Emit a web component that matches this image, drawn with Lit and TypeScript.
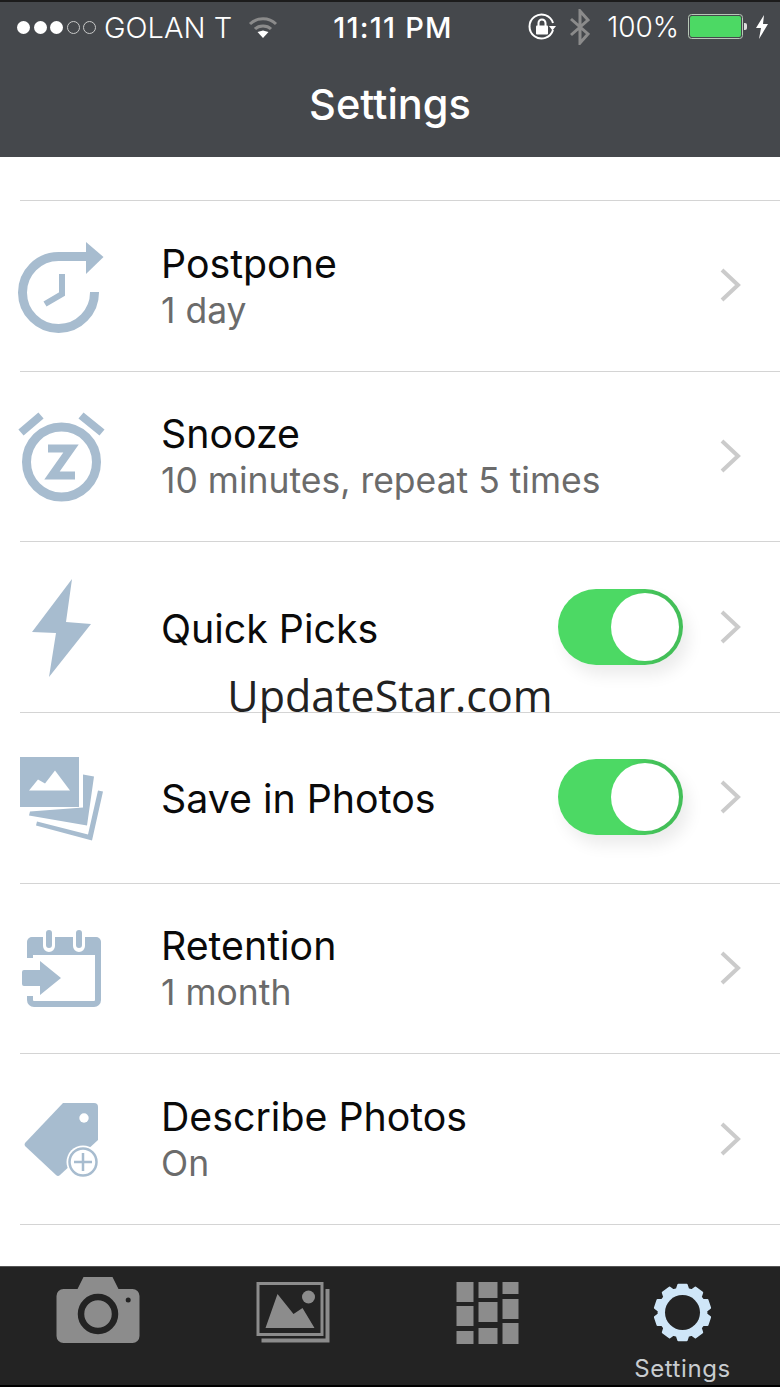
import { LitElement, html, css } from "lit";
import { customElement } from "lit/decorators.js";

const gearPath = () => {
  // 10 teeth round a ring, centre 682,1312.5
  const cx = 682, cy = 1312.5, outer = 28, inner = 24;
  let d = "";
  for (let i = 0; i < 10; i++) {
    const a = (i * Math.PI) / 5 - Math.PI / 2;
    const pts = [[inner, -0.24], [outer, -0.15], [outer, 0.15], [inner, 0.24]];
    for (const [r, o] of pts) {
      const x = cx + r * Math.cos(a + o);
      const y = cy + r * Math.sin(a + o);
      d += `${d ? "L" : "M"}${x.toFixed(1)} ${y.toFixed(1)}`;
    }
  }
  return d + "Z";
};

const icons = {
  postpone: html`<svg viewBox="10 236 100 100">
    <path class="line" stroke-width="9" d="M94.5 293A36 36 0 1 1 58.5 257.5H88" />
    <polygon class="fill" points="86,243 103.5,258 86,275" />
    <path class="line" stroke-width="6" d="M62 275V295L45 305" />
  </svg>`,
  snooze: html`<svg viewBox="10 406.5 100 100">
    <circle class="line" cx="61.5" cy="462.5" r="35" stroke-width="9" />
    <path class="line" stroke-width="8" d="M21 433L41 416M81 416L102 433" />
    <path class="line" stroke-width="8" d="M48 449H71L52 476H75" />
  </svg>`,
  quick: html`<svg viewBox="10 577 100 100">
    <polygon class="fill" points="72,579 66,622 91,624 49,677 56,633 32,632" />
  </svg>`,
  photos: html`<svg viewBox="10 747.500 100 100">
    <rect class="fill" x="20" y="757.500" width="59" height="50" />
    <polygon fill="#fff" points="29,791 38,780 45,784 55,771 70,791" />
    <polygon class="fill" points="83,775 94,777 87,826 29,816 30,812 83,808" />
    <polygon class="fill" points="98,791 103,792 92,841 36,826 37,822 88,835" />
  </svg>`,
  retention: html`<svg viewBox="10 918 100 100">
    <rect class="line" x="30" y="940" width="68" height="64" rx="4" stroke-width="6" />
    <rect class="fill" x="27" y="937" width="74" height="18" rx="5" />
    <path d="M49 928V946M79 928V946" stroke="#fff" stroke-width="12" stroke-linecap="round" />
    <path class="line" stroke-width="6" stroke-linecap="round" d="M49 933V945M79 933V945" />
    <rect x="24" y="958" width="20" height="38" fill="#fff" />
    <path class="fill" d="M22 972a2 2 0 0 1 2-2H40V961L61 978L40 995V986H24a2 2 0 0 1-2-2Z" />
  </svg>`,
  describe: html`<svg viewBox="10 1089 100 100">
    <path class="fill" d="M63 1103H94a4 4 0 0 1 4 4V1140L60 1175a3 3 0 0 1-4 0L25 1146a3 3 0 0 1 0-3Z" />
    <circle cx="84" cy="1118" r="4.700" fill="#fff" />
    <circle cx="83" cy="1162" r="16.500" fill="#fff" />
    <circle class="line" cx="83" cy="1162" r="13.500" stroke-width="2.500" />
    <path class="line" stroke-width="2.500" d="M83 1153V1171M74 1162H92" />
  </svg>`,
};

const rows = [
  { icon: icons.postpone, label: "Postpone", sub: "1 day" },
  { icon: icons.snooze, label: "Snooze", sub: "10 minutes, repeat 5 times" },
  { icon: icons.quick, label: "Quick Picks", toggle: true },
  { icon: icons.photos, label: "Save in Photos", toggle: true },
  { icon: icons.retention, label: "Retention", sub: "1 month" },
  { icon: icons.describe, label: "Describe Photos", sub: "On" },
];

@customElement("app-root")
export class AppRoot extends LitElement {
  static styles = css`
    :host {
      display: flex;
      flex-direction: column;
      position: relative;
      height: 1387px;
      background: #fff;
      font-family: Inter, "Liberation Sans", sans-serif;
      overflow: hidden;
    }

    .top {
      background: #45484c;
      border-top: 2px solid #1c1c1c;
      height: 155px;
      color: #fff;
    }

    .status {
      display: grid;
      grid-template-columns: 1fr auto 1fr;
      align-items: center;
      height: 50px;
      font-size: 28px;
      font-weight: 300;
    }

    .status-left {
      display: flex;
      align-items: center;
      padding-left: 17px;
    }

    .dots {
      display: flex;
      gap: 3.500px;
      margin-right: 8px;
    }

    .dot {
      width: 13px;
      height: 13px;
      border-radius: 50%;
      box-sizing: border-box;
      background: #fff;
    }

    .dot.off {
      background: none;
      border: 1px solid #c8c8c8;
    }

    .name {
      font-size: 29px;
    }

    .wifi {
      width: 30px;
      height: 24px;
      margin-left: 16px;
    }

    .time {
      font-weight: 500;
      font-size: 29px;
      letter-spacing: 1.2px;
      padding-left: 6px;
    }

    .status-right {
      display: flex;
      align-items: center;
      justify-content: flex-end;
      padding-right: 11px;
    }

    .lock {
      width: 28px;
      height: 28px;
    }

    .bt {
      width: 20px;
      height: 36px;
      margin-left: 14px;
    }

    .pct {
      margin-left: 17px;
    }

    .battery {
      width: 60px;
      height: 26px;
      margin-left: 9px;
    }

    .charge {
      width: 14px;
      height: 24px;
      margin-left: 7px;
    }

    .title {
      text-align: center;
      font-size: 41.500px;
      font-weight: 500;
      line-height: 46px;
      margin-top: 29px;
    }

    .list {
      flex: 1;
      padding-top: 43px;
    }

    .row {
      display: flex;
      align-items: center;
      height: 170.670px;
      box-sizing: border-box;
      position: relative;
      padding-left: 10px;
    }

    .row::before {
      content: "";
      position: absolute;
      left: 20px;
      right: 0;
      top: 0;
      height: 1px;
      background: #d4d4d4;
    }

    .list-end {
      margin-left: 20px;
      height: 1px;
      background: #d4d4d4;
    }

    .icon svg {
      display: block;
      width: 100px;
      height: 100px;
    }

    .icon .fill {
      fill: #a7bccf;
    }

    .icon .line {
      fill: none;
      stroke: #a7bccf;
    }

    .text {
      flex: 1;
      margin-left: 51px;
    }

    .label {
      font-size: 39.300px;
      line-height: 46px;
      color: #0a0a0a;
      padding-top: 4px;
    }

    .sub {
      font-size: 35.500px;
      line-height: 46px;
      color: #6b6b6b;
      padding-top: 1px;
    }

    .toggle {
      display: flex;
      align-items: center;
      justify-content: flex-end;
      width: 125px;
      height: 76px;
      padding-right: 4px;
      box-sizing: border-box;
      border-radius: 38px;
      background: linear-gradient(90deg, #4cd964 55%, #43bf58 80%);
      box-shadow: 6px 10px 16px rgba(0, 0, 0, 0.08);
    }

    .knob {
      width: 68px;
      height: 68px;
      border-radius: 50%;
      background: #fff;
    }

    .chevron {
      width: 24px;
      height: 34px;
      margin-left: 36px;
      margin-right: 37px;
    }

    .tabs {
      display: grid;
      grid-template-columns: repeat(4, 1fr);
      height: 121px;
      box-sizing: border-box;
      background: #232323;
      border-top: 1px solid #555;
      border-bottom: 2px solid #000;
    }

    .tab {
      display: flex;
      flex-direction: column;
      align-items: center;
      padding-top: 5px;
    }

    .tab svg {
      display: block;
      width: 100px;
      height: 75px;
    }

    .tab-label {
      font-size: 24px;
      line-height: 30px;
      margin-top: 7px;
      letter-spacing: 0.6px;
      color: #c8ccd0;
    }

    .mark {
      position: absolute;
      left: 0;
      right: 0;
      top: 667px;
      text-align: center;
      font-family: "Open Sans", sans-serif;
      font-size: 43px;
      line-height: 58px;
      color: #222;
    }
  `;

  render() {
    return html`
      <div class="top">
        <div class="status">
          <div class="status-left">
            <div class="dots">
              <div class="dot"></div>
              <div class="dot"></div>
              <div class="dot"></div>
              <div class="dot off"></div>
              <div class="dot off"></div>
            </div>
            <span class="name">GOLAN T</span>
            <svg class="wifi" viewBox="0 0 30 24">
              <path d="M2 9C9 2 21 2 28 9M7 14C11 10 19 10 23 14" fill="none" stroke="#8b8b8b" stroke-width="3" />
              <polygon points="9.500,17 15,23 20.500,17 15,15.500" fill="#fff" />
            </svg>
          </div>
          <div class="time">11:11 PM</div>
          <div class="status-right">
            <svg class="lock" viewBox="0 0 28 28">
              <path d="M25 17A12 12 0 1 1 25 10" fill="none" stroke="#fff" stroke-width="2" />
              <polygon points="21,13 28,13 24.500,17.500" fill="#fff" />
              <rect x="8" y="12.500" width="12" height="9" rx="1" fill="#fff" />
              <path d="M10.500 13V10a3.500 3.500 0 0 1 7 0V13" fill="none" stroke="#fff" stroke-width="2" />
            </svg>
            <svg class="bt" viewBox="0 0 20 36">
              <path d="M1 10L18 25L10 34V2L18 11L1 26" fill="none" stroke="#8b8b8b" stroke-width="3" />
            </svg>
            <span class="pct">100%</span>
            <svg class="battery" viewBox="0 0 60 26">
              <rect x="0.500" y="0.500" width="54" height="24" rx="3" fill="none" stroke="#b8c8b8" />
              <rect x="2" y="2" width="51" height="21" rx="2" fill="#4cd964" />
              <path d="M56 9h1a2 2 0 0 1 2 2v3a2 2 0 0 1-2 2h-1Z" fill="#ddd" />
            </svg>
            <svg class="charge" viewBox="0 0 14 24">
              <polygon points="9,0 1,13 6,13 4,24 13,9 8,9" fill="#fff" />
            </svg>
          </div>
        </div>
        <div class="title">Settings</div>
      </div>

      <div class="list">
        ${rows.map(
          (r) => html`
            <div class="row">
              <div class="icon">${r.icon}</div>
              <div class="text">
                <div class="label">${r.label}</div>
                ${r.sub ? html`<div class="sub">${r.sub}</div>` : ""}
              </div>
              ${r.toggle ? html`<div class="toggle"><div class="knob"></div></div>` : ""}
              <svg class="chevron" viewBox="0 0 24 34">
                <path d="M3 2L19 17L3 32" fill="none" stroke="#cbcbcb" stroke-width="4" />
              </svg>
            </div>
          `
        )}
        <div class="list-end"></div>
      </div>

      <div class="tabs">
        <div class="tab">
          <svg viewBox="47.500 1272 100 75">
            <path d="M63 1289H77L83 1277H112L118 1289H132a7 7 0 0 1 7 7V1336a7 7 0 0 1-7 7H63a7 7 0 0 1-7-7V1296a7 7 0 0 1 7-7Z" fill="#8c8c8c" />
            <circle cx="97.500" cy="1314" r="17" fill="none" stroke="#232323" stroke-width="6.500" />
            <circle cx="127.700" cy="1300" r="2.500" fill="#232323" />
          </svg>
        </div>
        <div class="tab">
          <svg viewBox="242.500 1272 100 75">
            <rect x="257.500" y="1283.500" width="64" height="51" fill="none" stroke="#8c8c8c" stroke-width="3" />
            <path d="M261 1340.500H327V1289" fill="none" stroke="#8c8c8c" stroke-width="4" />
            <polygon points="265,1328 277,1294 293,1314 302,1308 314,1328" fill="#8c8c8c" />
            <circle cx="308" cy="1297" r="6.500" fill="#8c8c8c" />
          </svg>
        </div>
        <div class="tab">
          <svg viewBox="437.500 1272 100 75" fill="#8c8c8c">
            <rect x="456" y="1282" width="17" height="20" />
            <rect x="456" y="1306" width="17" height="20" />
            <rect x="456" y="1331" width="17" height="13" />
            <rect x="478" y="1282" width="19" height="16" />
            <rect x="478" y="1302" width="19" height="20" />
            <rect x="478" y="1328" width="19" height="16" />
            <rect x="502" y="1282" width="16" height="12" />
            <rect x="502" y="1299" width="16" height="20" />
            <rect x="502" y="1323" width="16" height="21" />
          </svg>
        </div>
        <div class="tab">
          <svg viewBox="632.500 1272 100 75">
            <path d="${gearPath()}" fill="#cfe6f8" stroke="#cfe6f8" stroke-width="2" stroke-linejoin="round" />
            <circle cx="682" cy="1312.500" r="17.500" fill="#232323" />
          </svg>
          <div class="tab-label">Settings</div>
        </div>
      </div>

      <div class="mark">UpdateStar.com</div>
    `;
  }
}
